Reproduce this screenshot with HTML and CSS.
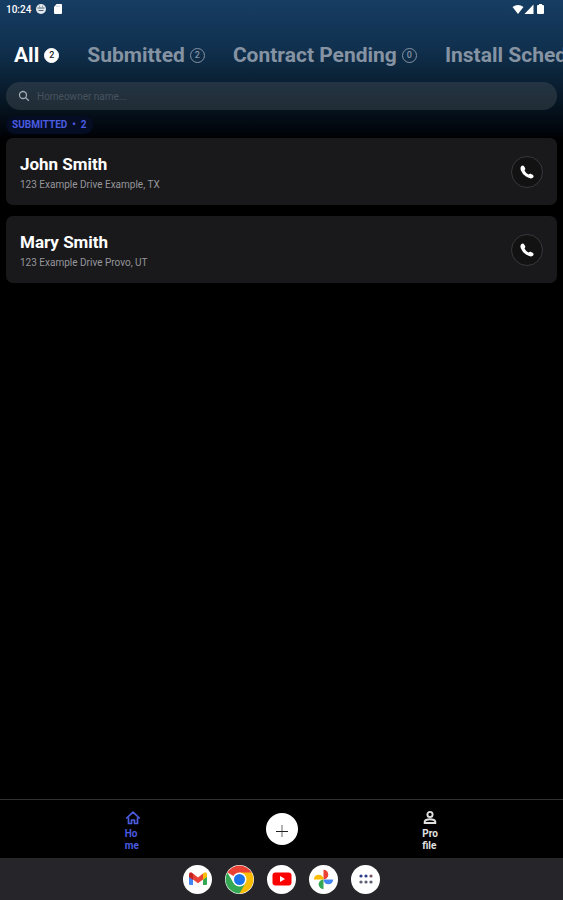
FILE: index.html
```html
<!DOCTYPE html>
<html lang="en">
<head>
    <meta charset="UTF-8">
    <meta name="viewport" content="width=device-width, initial-scale=1.0">
    <title>Homeowners</title>
    <link rel="stylesheet" href="styles.css">
</head>
<body>
    <header class="header">
        <div class="status-bar">
            <div class="status-left">
                <span>10:24</span>
                <svg width="12" height="12" viewBox="0 0 12 12">
                    <circle cx="6" cy="6" r="5" fill="#e4e9ee"/>
                    <path d="M2.5 5h7M3.5 7.5h5M4 3.2h.8M7.2 3.2h.8" stroke="#4c6278" stroke-width="1" fill="none"/>
                </svg>
                <svg width="12" height="12" viewBox="0 0 12 12">
                    <path d="M5.5 1h4.700Q11 1 11 2v8q0 1-1 1H4q-1 0-1-1V4z" fill="#fff"/>
                    <path d="M6 2.500v1.500M8 2.500v1.500" stroke="#9fb0c0" stroke-width=".8"/>
                </svg>
            </div>
            <div class="status-right">
                <svg width="12" height="12" viewBox="0 0 12 12"><path d="M0.500 4Q6 0 11.500 4L6 11z" fill="#fff"/></svg>
                <svg width="10" height="12" viewBox="0 0 10 12"><path d="M9.500 1.500V11H0.500z" fill="#fff"/></svg>
                <svg width="12" height="12" viewBox="0 0 12 12"><path d="M5 1h3v1h1q1 0 1 1v7q0 1-1 1H4q-1 0-1-1V3q0-1 1-1h1z" fill="#fff"/></svg>
            </div>
        </div>
        <nav class="tabs">
            <button class="tab active">All <span class="count">2</span></button>
            <button class="tab">Submitted <span class="count">2</span></button>
            <button class="tab">Contract Pending <span class="count">0</span></button>
            <button class="tab">Install Scheduled <span class="count">0</span></button>
        </nav>
        <div class="search">
            <svg width="12" height="12" viewBox="0 0 12 12" fill="none" stroke="#a3acb4" stroke-width="1.3">
                <circle cx="5" cy="5" r="3.5"/>
                <path d="M7.6 7.6l3.200 3.200"/>
            </svg>
            <input type="text" placeholder="Homeowner name..." aria-label="Homeowner name">
        </div>
        <h2 class="group-title">SUBMITTED &nbsp;•&nbsp; 2</h2>
    </header>

    <main class="list">
        <div class="card">
            <div>
                <h3>John Smith</h3>
                <p>123 Example Drive Example, TX</p>
            </div>
            <button class="call-btn" aria-label="Call John Smith">
                <svg width="16" height="16" viewBox="0 0 16 16"><path d="M2.200 2.200Q4 .5 5.200 2.400L6.200 4.300Q6.600 5.200 5.500 6.500Q6.800 9.200 9.500 10.500Q10.800 9.400 11.700 9.800L13.600 10.800Q15.500 12 13.800 13.800Q11.500 15.500 7 12.600Q3.200 10 1.700 6Q1 3.500 2.200 2.200z" fill="#fff"/></svg>
            </button>
        </div>
        <div class="card">
            <div>
                <h3>Mary Smith</h3>
                <p>123 Example Drive Provo, UT</p>
            </div>
            <button class="call-btn" aria-label="Call Mary Smith">
                <svg width="16" height="16" viewBox="0 0 16 16"><path d="M2.200 2.200Q4 .5 5.200 2.400L6.200 4.300Q6.600 5.200 5.500 6.500Q6.800 9.200 9.500 10.500Q10.800 9.400 11.700 9.800L13.600 10.800Q15.500 12 13.800 13.800Q11.500 15.500 7 12.600Q3.200 10 1.700 6Q1 3.500 2.200 2.200z" fill="#fff"/></svg>
            </button>
        </div>
    </main>

    <nav class="bottom-nav">
        <a href="#" class="nav-item active">
            <svg width="16" height="16" viewBox="0 0 16 16" fill="none" stroke="currentColor" stroke-width="1.7" stroke-linejoin="round">
                <path d="M1.200 8.500L8 2.200l6.800 6.300M3.500 7.500V13.500h3v-3.500h3v3.500h3V7.500"/>
            </svg>
            <span>Home</span>
        </a>
        <button class="add-btn" aria-label="Add homeowner">
            <svg width="14" height="18" viewBox="0 0 14 18">
                <path d="M7 5v12" stroke="#b4b4b4" stroke-width="2"/>
                <path d="M1 11.500h12" stroke="#222" stroke-width="1"/>
            </svg>
        </button>
        <a href="#" class="nav-item">
            <svg width="16" height="16" viewBox="0 0 16 16" fill="none" stroke="currentColor" stroke-width="1.9">
                <circle cx="8" cy="4.500" r="2.600"/>
                <path d="M2.700 13v-1.500Q3.500 9.300 8 9.300t5.300 2.200V13z"/>
            </svg>
            <span>Profile</span>
        </a>
    </nav>

    <footer class="dock">
        <button class="app" aria-label="Gmail">
            <svg width="20" height="16" viewBox="0 0 20 16">
                <path d="M1 3v10q0 1 1 1h3V6z" fill="#4285f4"/>
                <path d="M19 3v10q0 1-1 1h-3V6z" fill="#34a853"/>
                <path d="M15 2.500l2-1.300q2 0 2 2.300V6l-4 3z" fill="#fbbc04"/>
                <path d="M5 2.500L3 1.200q-2 0-2 2.300V6l4 3z" fill="#c5221f"/>
                <path d="M5 2.500L10 6.500l5-4V8.500L10 12.200 5 8.500z" fill="#ea4335"/>
            </svg>
        </button>
        <button class="app" aria-label="Chrome">
            <svg width="29" height="29" viewBox="0 0 29 29">
                <path d="M14.500 14.500L2.400 7.500A14 14 0 0 1 26.600 7.500z" fill="#ea4335"/>
                <path d="M14.500 14.500V7.500H26.600A14 14 0 0 1 14.500 28.500z" fill="#fbbc04"/>
                <path d="M14.500 28.500A14 14 0 0 1 2.400 7.500L8.500 18 14.500 14.500 20.500 18z" fill="#34a853"/>
                <circle cx="14.500" cy="14.500" r="7" fill="#fff"/>
                <circle cx="14.500" cy="14.500" r="5.500" fill="#1a73e8"/>
            </svg>
        </button>
        <button class="app" aria-label="YouTube">
            <svg width="20" height="14" viewBox="0 0 20 14">
                <rect x="0.500" y="0.500" width="19" height="13" rx="3" fill="#f00"/>
                <path d="M8 4v6l5-3z" fill="#fff"/>
            </svg>
        </button>
        <button class="app" aria-label="Photos">
            <svg width="21" height="21" viewBox="0 0 20 20">
                <path d="M10 0.800A4.600 4.600 0 0 1 10 10z" fill="#ea4335"/>
                <path d="M19.200 10A4.600 4.600 0 0 1 10 10z" fill="#4285f4"/>
                <path d="M10 19.200A4.600 4.600 0 0 1 10 10z" fill="#34a853"/>
                <path d="M0.800 10A4.600 4.600 0 0 1 10 10z" fill="#fbbc04"/>
            </svg>
        </button>
        <button class="app" aria-label="All apps">
            <svg width="16" height="12" viewBox="0 0 16 12">
                <g fill="#2d3e8c"><circle cx="3" cy="3" r="1.600"/><circle cx="8" cy="3" r="1.600"/></g>
                <circle cx="13" cy="3" r="1.600" fill="#7a5568"/>
                <g fill="#5c6072"><circle cx="3" cy="9" r="1.600"/><circle cx="8" cy="9" r="1.600"/><circle cx="13" cy="9" r="1.600"/></g>
            </svg>
        </button>
    </footer>
</body>
</html>
```
FILE: styles.css
```css
* {
    box-sizing: border-box;
}
body {
    margin: 0;
    min-height: 100vh;
    display: flex;
    flex-direction: column;
    background: #000;
    color: #fff;
    font-family: Roboto, Arial, sans-serif;
    overflow-x: hidden;
}
button {
    font-family: inherit;
    border: none;
    padding: 0;
    cursor: pointer;
}
h2, h3, p {
    margin: 0;
}
svg {
    display: block;
    flex-shrink: 0;
}
.header {
    padding: 0 6px 5px;
    background: linear-gradient(#163d63, #10304e 35%, #071725 72%, #01050b 95%, #000);
}
.status-bar {
    display: flex;
    justify-content: space-between;
    height: 18px;
    padding-right: 11px;
    font-size: 10px;
    font-weight: 500;
}
.status-left, .status-right {
    display: flex;
    align-items: center;
}
.status-left {
    gap: 4px;
}
.tabs {
    display: flex;
    gap: 28px;
    height: 64px;
    padding: 0 8px;
    margin-right: -6px;
    align-items: center;
    overflow: hidden;
}
.tab {
    display: flex;
    align-items: center;
    gap: 5px;
    padding-top: 10px;
    background: none;
    color: #8593a3;
    font-size: 21px;
    line-height: 28px;
    font-weight: 700;
    white-space: nowrap;
}
.count {
    width: 15px;
    height: 15px;
    border: 1px solid #8593a3;
    border-radius: 50%;
    font-size: 9px;
    line-height: 13px;
    font-weight: 500;
    text-align: center;
}
.tab.active {
    color: #fff;
}
.tab.active .count {
    background: #fff;
    border-color: #fff;
    color: #222;
}
.search {
    display: flex;
    align-items: center;
    gap: 7px;
    height: 28px;
    padding: 0 12px;
    border-radius: 14px;
    background: linear-gradient(#233443, #212c35);
}
.search input {
    flex: 1;
    min-width: 0;
    padding: 0;
    border: none;
    outline: none;
    background: none;
    color: #fff;
    font-family: inherit;
    font-size: 10px;
}
.search input::placeholder {
    color: #46535e;
    opacity: 1;
}
.group-title {
    width: fit-content;
    margin-top: 6px;
    padding: 0 6px;
    border-radius: 9px;
    background: #050d24;
    color: #4a5be0;
    font-size: 10px;
    line-height: 18px;
    font-weight: 700;
}
.list {
    flex: 1;
    display: flex;
    flex-direction: column;
    gap: 11px;
    padding: 0 6px;
    margin-top: -1px;
}
.card {
    display: flex;
    align-items: center;
    justify-content: space-between;
    height: 67px;
    padding: 0 14px;
    border-radius: 7px;
    background: #19191b;
}
.card h3 {
    padding-top: 2px;
    font-size: 17px;
    line-height: 22px;
    font-weight: 700;
}
.card p {
    margin-top: 2px;
    color: #96969c;
    font-size: 10px;
    line-height: 16px;
}
.call-btn {
    display: flex;
    align-items: center;
    justify-content: center;
    width: 32px;
    height: 32px;
    border: 1px solid #38383b;
    border-radius: 50%;
    background: #121213;
}
.bottom-nav {
    display: flex;
    justify-content: space-evenly;
    align-items: center;
    height: 59px;
    border-top: 1px solid #323234;
}
.nav-item {
    display: flex;
    flex-direction: column;
    align-items: center;
    gap: 2px;
    width: 32px;
    padding-top: 4px;
    color: #e2e2e2;
    font-size: 10px;
    line-height: 12px;
    font-weight: 700;
    text-decoration: none;
}
.nav-item.active {
    color: #4a5be0;
}
.nav-item span {
    width: 16px;
    word-break: break-all;
}
.add-btn {
    display: flex;
    align-items: center;
    justify-content: center;
    width: 32px;
    height: 32px;
    border-radius: 50%;
    background: #fff;
}
.dock {
    display: flex;
    justify-content: center;
    align-items: center;
    gap: 13px;
    height: 42px;
    background: #26262a;
}
.app {
    display: flex;
    align-items: center;
    justify-content: center;
    width: 29px;
    height: 29px;
    border-radius: 50%;
    background: #fff;
}
```
